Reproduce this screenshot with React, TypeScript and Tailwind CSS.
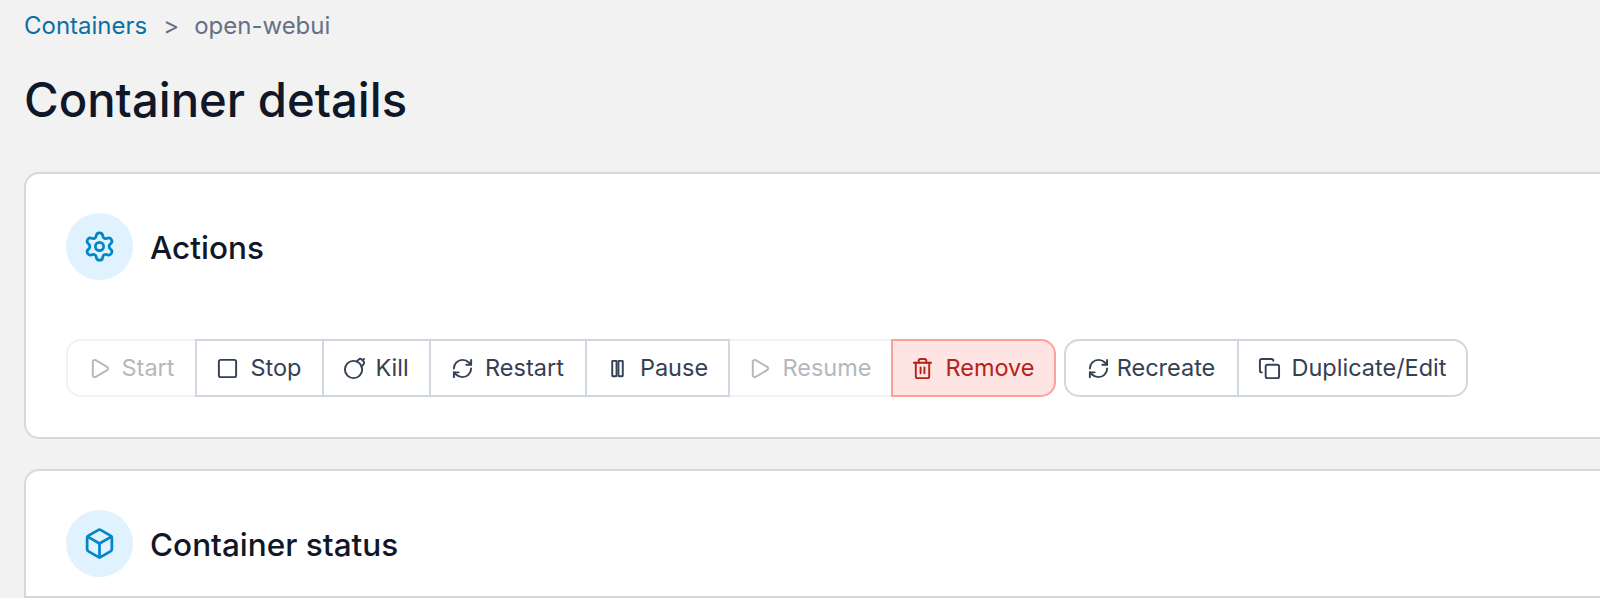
import React from 'react';
import { Play, Square, Bomb, RefreshCw, Trash2, Copy, Settings, Box } from 'lucide-react';

type IconType = React.ComponentType<{ className?: string; strokeWidth?: number }>;

// narrower than lucide's Pause, bars sit closer together in the reference
const PauseBars: IconType = ({ className, strokeWidth }) => (
    <svg viewBox="0 0 24 24" fill="none" stroke="currentColor" strokeWidth={strokeWidth} strokeLinejoin="round" className={className}>
        <rect x="6.5" y="4" width="4.5" height="16" rx="0.5" />
        <rect x="13" y="4" width="4.5" height="16" rx="0.5" />
    </svg>
);

const ActionButton: React.FC<{ icon: IconType; label: string; className: string; gap?: string }> = ({ icon: Icon, label, className, gap = 'gap-[11px]' }) => (
    <button className={`h-[58px] flex items-center justify-center border-2 pr-[1px] -ml-[2px] first:ml-0 first:rounded-l-[15px] last:rounded-r-[15px] ${gap} ${className}`}>
        <Icon className="w-[23px] h-[23px]" strokeWidth={2} />
        <span>{label}</span>
    </button>
);

const normal = 'bg-white border-[#d0d7de] text-[#344054]';
const disabled = 'bg-white border-[#f0f1f3] text-[#b4b8be] z-0';

const CardHeader: React.FC<{ icon: IconType; title: string }> = ({ icon: Icon, title }) => (
    <div className="flex items-center gap-[17px]">
        <div className="w-[67px] h-[67px] rounded-full bg-[#e0f2fe] flex items-center justify-center">
            <Icon className="w-[33px] h-[33px] text-[#0086c9]" strokeWidth={2} />
        </div>
        <h2 className="text-[31.5px] font-[450] text-[#101828] translate-y-[1px]">{title}</h2>
    </div>
);

export default function App() {
    return (
        <div className="w-[1600px] h-[598px] overflow-hidden bg-[#f2f2f3] pl-[24px] font-['Inter',sans-serif]">
            <nav className="h-[52px] flex items-center text-[24px]">
                <span className="text-[#0b6fa4]">Containers</span>
                <span className="ml-[16px] text-[#667085]">&gt;</span>
                <span className="ml-[15px] text-[#667085]">open-webui</span>
            </nav>
            <h1 className="mt-[16px] h-[64px] flex items-center text-[47.25px] font-medium leading-none text-[#101828]">Container details</h1>

            <section className="mt-[40px] w-[1700px] h-[267px] bg-white border-2 border-[#d5d9df] rounded-[15px] pl-[40px] pt-[39px]">
                <CardHeader icon={Settings} title="Actions" />
                <div className="mt-[59px] flex items-center text-[23.5px]">
                    <div className="flex">
                        <ActionButton icon={Play} label="Start" className={`w-[131px] ${disabled}`} />
                        <ActionButton icon={Square} label="Stop" className={`w-[129px] ${normal} z-10`} />
                        <ActionButton icon={Bomb} label="Kill" className={`w-[109px] ${normal} z-10`} gap="gap-[9px]" />
                        <ActionButton icon={RefreshCw} label="Restart" className={`w-[158px] ${normal} z-10`} />
                        <ActionButton icon={PauseBars} label="Pause" className={`w-[145px] ${normal} z-10`} />
                        <ActionButton icon={Play} label="Resume" className={`w-[165px] ${disabled}`} />
                        <ActionButton icon={Trash2} label="Remove" className="w-[165px] bg-[#fee4e2] border-[#fda29b] text-[#b42318] z-10" />
                    </div>
                    <div className="flex ml-[8px]">
                        <ActionButton icon={RefreshCw} label="Recreate" className={`w-[175px] ${normal}`} gap="gap-[7px]" />
                        <ActionButton icon={Copy} label="Duplicate/Edit" className={`w-[231px] ${normal}`} />
                    </div>
                </div>
            </section>

            <section className="mt-[30px] w-[1700px] h-[129px] bg-white border-2 border-[#d5d9df] rounded-t-[15px] pl-[40px] pt-[39px]">
                <CardHeader icon={Box} title="Container status" />
            </section>
        </div>
    );
}
